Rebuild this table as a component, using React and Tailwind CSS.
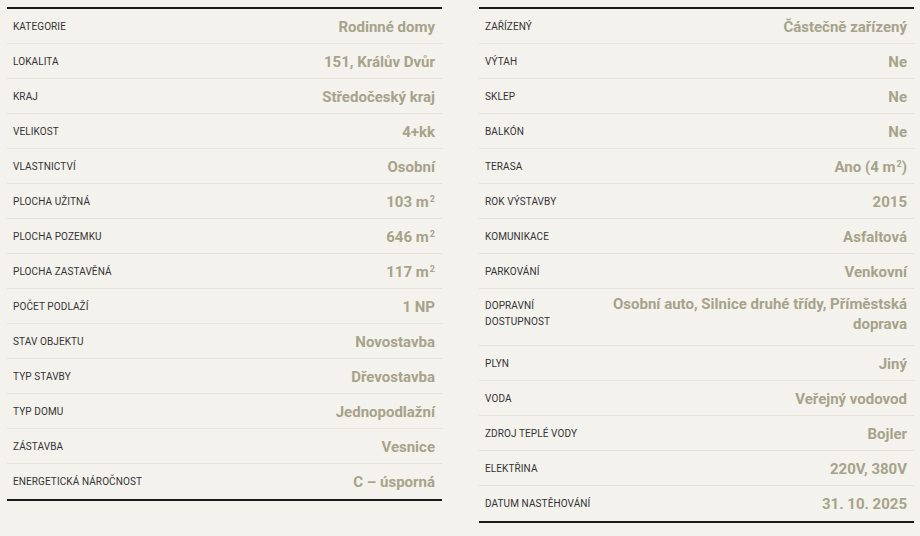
import React from "react";

const M2 = ({ n }) => (
  <>
    {n} m<sup className="text-[9px] ml-[1px]">2</sup>
  </>
);

const left = [
  ["KATEGORIE", "Rodinné domy"],
  ["LOKALITA", "151, Králův Dvůr"],
  ["KRAJ", "Středočeský kraj"],
  ["VELIKOST", "4+kk"],
  ["VLASTNICTVÍ", "Osobní"],
  ["PLOCHA UŽITNÁ", <M2 n="103" />],
  ["PLOCHA POZEMKU", <M2 n="646" />],
  ["PLOCHA ZASTAVĚNÁ", <M2 n="117" />],
  ["POČET PODLAŽÍ", "1 NP"],
  ["STAV OBJEKTU", "Novostavba"],
  ["TYP STAVBY", "Dřevostavba"],
  ["TYP DOMU", "Jednopodlažní"],
  ["ZÁSTAVBA", "Vesnice"],
  ["ENERGETICKÁ NÁROČNOST", "C – úsporná"],
];

const right = [
  ["ZAŘÍZENÝ", "Částečně zařízený"],
  ["VÝTAH", "Ne"],
  ["SKLEP", "Ne"],
  ["BALKÓN", "Ne"],
  ["TERASA", <>Ano (<M2 n="4" />)</>],
  ["ROK VÝSTAVBY", "2015"],
  ["KOMUNIKACE", "Asfaltová"],
  ["PARKOVÁNÍ", "Venkovní"],
  ["DOPRAVNÍ DOSTUPNOST", "Osobní auto, Silnice druhé třídy, Příměstská doprava", true],
  ["PLYN", "Jiný"],
  ["VODA", "Veřejný vodovod"],
  ["ZDROJ TEPLÉ VODY", "Bojler"],
  ["ELEKTŘINA", "220V, 380V"],
  ["DATUM NASTĚHOVÁNÍ", "31. 10. 2025"],
];

function Table({ rows }) {
  return (
    <div className="w-[435px] border-t-2 border-b-2 border-[#1a1a1a] mt-[7px]">
      {rows.map(([k, v, wide], i) => (
        <div
          key={i}
          className={
            "flex items-center justify-between gap-4 pl-[6px] pr-[7px] pt-[1px] " +
            (wide ? "min-h-[57px] py-[7px]" : "h-[35px]") +
            (i < rows.length - 1 ? " border-b border-[#e6e3dc]" : "")
          }
        >
          <div
            className={
              "text-[10px] leading-[16px] text-[#333] tracking-[0.01em] shrink-0 " +
              (wide ? "w-[90px]" : "")
            }
          >
            {k}
          </div>
          <div className="text-[15px] leading-[20px] font-bold text-[#a6a38a] text-right">
            {v}
          </div>
        </div>
      ))}
    </div>
  );
}

export default function App() {
  return (
    <div
      className="w-[920px] h-[536px] bg-[#f4f2ed] flex gap-[37px] pl-[7px] overflow-hidden"
      style={{ fontFamily: "Roboto, 'Liberation Sans', sans-serif" }}
    >
      <div>
        <Table rows={left} />
      </div>
      <div>
        <Table rows={right} />
      </div>
    </div>
  );
}
